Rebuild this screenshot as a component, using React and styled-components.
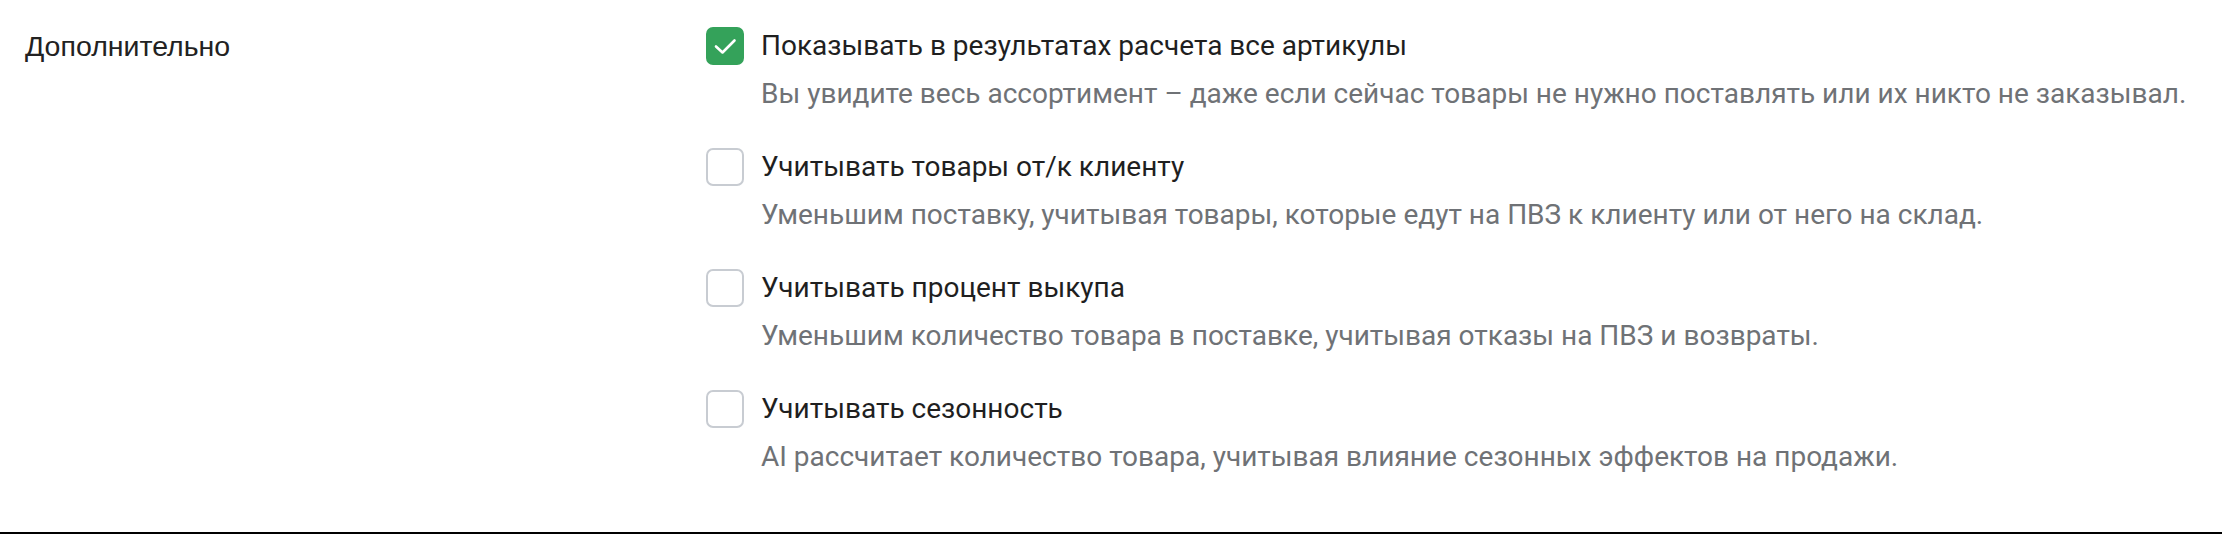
import React from 'react';
import styled, { createGlobalStyle } from 'styled-components';

const GlobalStyle = createGlobalStyle`
    html, body {
        margin: 0;
        padding: 0;
        background: #ffffff;
    }
`;

const options = [
    {
        title: 'Показывать в результатах расчета все артикулы',
        text: 'Вы увидите весь ассортимент – даже если сейчас товары не нужно поставлять или их никто не заказывал.',
        checked: true,
    },
    {
        title: 'Учитывать товары от/к клиенту',
        text: 'Уменьшим поставку, учитывая товары, которые едут на ПВЗ к клиенту или от него на склад.',
        checked: false,
    },
    {
        title: 'Учитывать процент выкупа',
        text: 'Уменьшим количество товара в поставке, учитывая отказы на ПВЗ и возвраты.',
        checked: false,
    },
    {
        title: 'Учитывать сезонность',
        text: 'AI рассчитает количество товара, учитывая влияние сезонных эффектов на продажи.',
        checked: false,
    },
];

const App = () => {
    return (
        <>
            <GlobalStyle />
            <StyledSection>
                <StyledLabel>Дополнительно</StyledLabel>
                <StyledList>
                    {options.map((o) => (
                        <StyledOption key={o.title}>
                            <StyledBox $checked={o.checked}>
                                {o.checked && (
                                    <svg width="34" height="34" viewBox="2 2 34 34" fill="none">
                                        <path d="M10 19.5l6.5 6 12-12" stroke="#fff" strokeWidth="2.6" strokeLinecap="round" strokeLinejoin="round" />
                                    </svg>
                                )}
                            </StyledBox>
                            <StyledCopy>
                                <StyledTitle>{o.title}</StyledTitle>
                                <StyledText>{o.text}</StyledText>
                            </StyledCopy>
                        </StyledOption>
                    ))}
                </StyledList>
            </StyledSection>
        </>
    );
};

export default App;

const StyledSection = styled.div`
    box-sizing: border-box;
    height: 534px;
    padding: 27px 0 0 25px;
    display: grid;
    grid-template-columns: 681px 1fr;
    border-bottom: 2px solid #000;
`;
const StyledLabel = styled.div`
    font-family: 'Liberation Sans', Arial, sans-serif;
    font-size: 28.5px;
    color: #222;
    line-height: 38px;
`;
const StyledList = styled.div`
    display: flex;
    flex-direction: column;
    gap: 37px;
`;
const StyledOption = styled.div`
    display: flex;
    align-items: flex-start;
    gap: 17px;
`;
const StyledBox = styled.div`
    box-sizing: border-box;
    flex: 0 0 38px;
    width: 38px;
    height: 38px;
    border-radius: 7px;
    display: flex;
    align-items: center;
    justify-content: center;
    background: ${(p) => (p.$checked ? '#34a25a' : '#fff')};
    border: 2px solid ${(p) => (p.$checked ? '#34a25a' : '#c8ccd2')};
`;
const StyledCopy = styled.div`
    display: flex;
    flex-direction: column;
`;
const StyledTitle = styled.div`
    font-family: Roboto, 'Noto Sans', sans-serif;
    font-size: 28px;
    line-height: 38px;
    color: #1f1f1f;
`;
const StyledText = styled.div`
    font-family: Roboto, 'Noto Sans', sans-serif;
    font-size: 28px;
    line-height: 34px;
    margin-top: 12px;
    color: #6f7276;
`;
